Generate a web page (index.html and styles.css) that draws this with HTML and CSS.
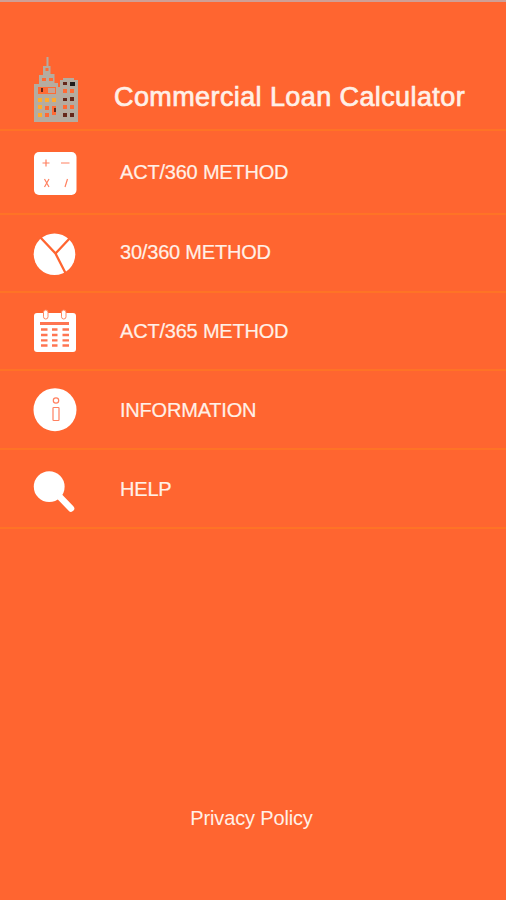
FILE: index.html
```
<!DOCTYPE html>
<html lang="en">
<head>
<meta charset="utf-8">
<title>Commercial Loan Calculator</title>
<link rel="stylesheet" href="styles.css">
</head>
<body>
<div class="app">
<header class="header">
  <svg class="logo" viewBox="0 0 70 80">
    <path fill="#b5aca0" d="M26.500 7h2v9h2v8h4v9h3.500v4h2v-7h3v-2h11v2h4v42H14V34h5v-9h4v-9h3.500z"/>
    <path fill="#ff6b35" d="M25.500 18h3v3h-3zM22 28h4v3h-4zM29 28h4v3h-4zM18 37h18v7H18zM43 39h4v4h-4zM50 39h4v4h-4zM43 55h4v4h-4zM50 55h4v4h-4zM32 56h4v9h-4zM25 56h4v4h-4zM25 63h4v4h-4z"/>
    <path fill="#c5a494" d="M28 38h7v5h-7z"/>
    <path fill="#ffac2f" d="M18 48h4v4h-4zM25 48h4v4h-4zM32 48h4v4h-4zM18 55h4v4h-4zM18 63h4v4h-4z"/>
    <path fill="#65281b" d="M43 32h4v3h-4zM43 48h4v3h-4zM50 47h4v4h-4zM43 63h4v4h-4zM50 63h4v4h-4zM21 38h2v4h-2zM34 58h2v4h-2z"/>
    <path fill="#211c1b" d="M50 32h5v4h-5z"/>
  </svg>
  <h1 class="title">Commercial Loan Calculator</h1>
</header>
<nav class="menu">
  <a class="row row-first">
    <svg class="icon" viewBox="0 0 64 60">
      <rect x="10" y="10" width="42.500" height="43" rx="5" fill="#fff"/>
      <path class="line" d="M18.500 21h7M22 17.500v7M37 21h8.500M20.500 37l4.500 8M25 37l-4.500 8M43.500 37l-2.500 8"/>
    </svg>
    <span class="label">ACT/360 METHOD</span>
  </a>
  <a class="row row-short row-raised">
    <svg class="icon" viewBox="0 -3 64 60">
      <circle cx="30.500" cy="29.200" r="20.800" fill="#fff"/>
      <path class="slice" d="M16 12l15.500 16.500L42 49M31.500 28.500L46 13"/>
    </svg>
    <span class="label">30/360 METHOD</span>
  </a>
  <a class="row row-short">
    <svg class="icon" viewBox="0 -1 64 60">
      <rect x="10" y="11" width="42" height="39" rx="3" fill="#fff"/>
      <rect class="ring" x="19.500" y="8" width="4.500" height="9" rx="2.200"/>
      <rect class="ring" x="37.500" y="8" width="4.500" height="9" rx="2.200"/>
      <path fill="#ff7551" d="M16 20h29v3H16z"/>
      <path class="cells" d="M17 27.500h6.500m4.500 0h5.500m5 0H45M17 33h6.500m4.500 0h5.500m5 0H45M17 38.300h6.500m4.500 0h5.500m5 0H45M17 43.500h6.500m4.500 0h5.500m5 0H45"/>
    </svg>
    <span class="label">ACT/365 METHOD</span>
  </a>
  <a class="row">
    <svg class="icon" viewBox="0 0 64 60">
      <circle cx="31" cy="29.700" r="21.500" fill="#fff"/>
      <circle class="line" cx="32" cy="20.500" r="2.700"/>
      <rect class="line" x="29" y="27.500" width="6" height="13" rx=".7"/>
    </svg>
    <span class="label">INFORMATION</span>
  </a>
  <a class="row">
    <svg class="icon" viewBox="0 -3 64 60">
      <circle cx="25.200" cy="24.700" r="15.400" fill="#fff"/>
      <path d="M34 33l13 13.500" stroke="#fff" stroke-width="6.500" stroke-linecap="round"/>
    </svg>
    <span class="label">HELP</span>
  </a>
</nav>
<footer class="footer"><a class="policy">Privacy Policy</a></footer>
</div>
</body>
</html>
```
FILE: styles.css
```
* { box-sizing: border-box; }
body { margin: 0; background: #ff6530; }
.app {
  display: flex;
  flex-direction: column;
  height: 900px;
  border-top: 2px solid #cf9f96;
  color: #fff0e7;
  font-family: "Liberation Sans", Arial, sans-serif;
}
.header {
  display: flex;
  height: 129px;
  padding: 48px 0 0 20px;
  border-bottom: 2px solid #ff7326;
}
.logo { flex: none; width: 70px; height: 80px; }
.title {
  margin: 31px 0 0 24px;
  font-size: 27px;
  font-weight: 400;
  line-height: 32px;
  letter-spacing: .4px;
  white-space: nowrap;
  -webkit-text-stroke: .7px #fff0e7;
}
.row {
  display: flex;
  align-items: center;
  height: 79px;
  padding: 1px 0 0 24px;
  border-bottom: 2px solid #ff7326;
}
.row-first { height: 84px; padding-top: 0; }
.row-short { height: 78px; padding: 0 0 1px 24px; }
.row-raised { padding-bottom: 2px; }
.icon { flex: none; width: 64px; height: 60px; fill: none; }
.line { stroke: #ff8060; stroke-width: 1.2; }
.slice { stroke: #ff6530; stroke-width: 2.3; }
.ring { fill: #fff; stroke: #ff8863; stroke-width: 1; }
.cells { stroke: #ff7551; stroke-width: 2.3; }
.label {
  margin-left: 32px;
  font-size: 20px;
  line-height: 24px;
  letter-spacing: -.2px;
  -webkit-text-stroke: .2px #fff0e7;
}
.footer {
  margin-top: auto;
  padding-bottom: 70px;
  text-align: center;
  font-size: 20px;
  line-height: 24px;
  letter-spacing: -.15px;
}
.policy { margin-right: 3px; }
```
